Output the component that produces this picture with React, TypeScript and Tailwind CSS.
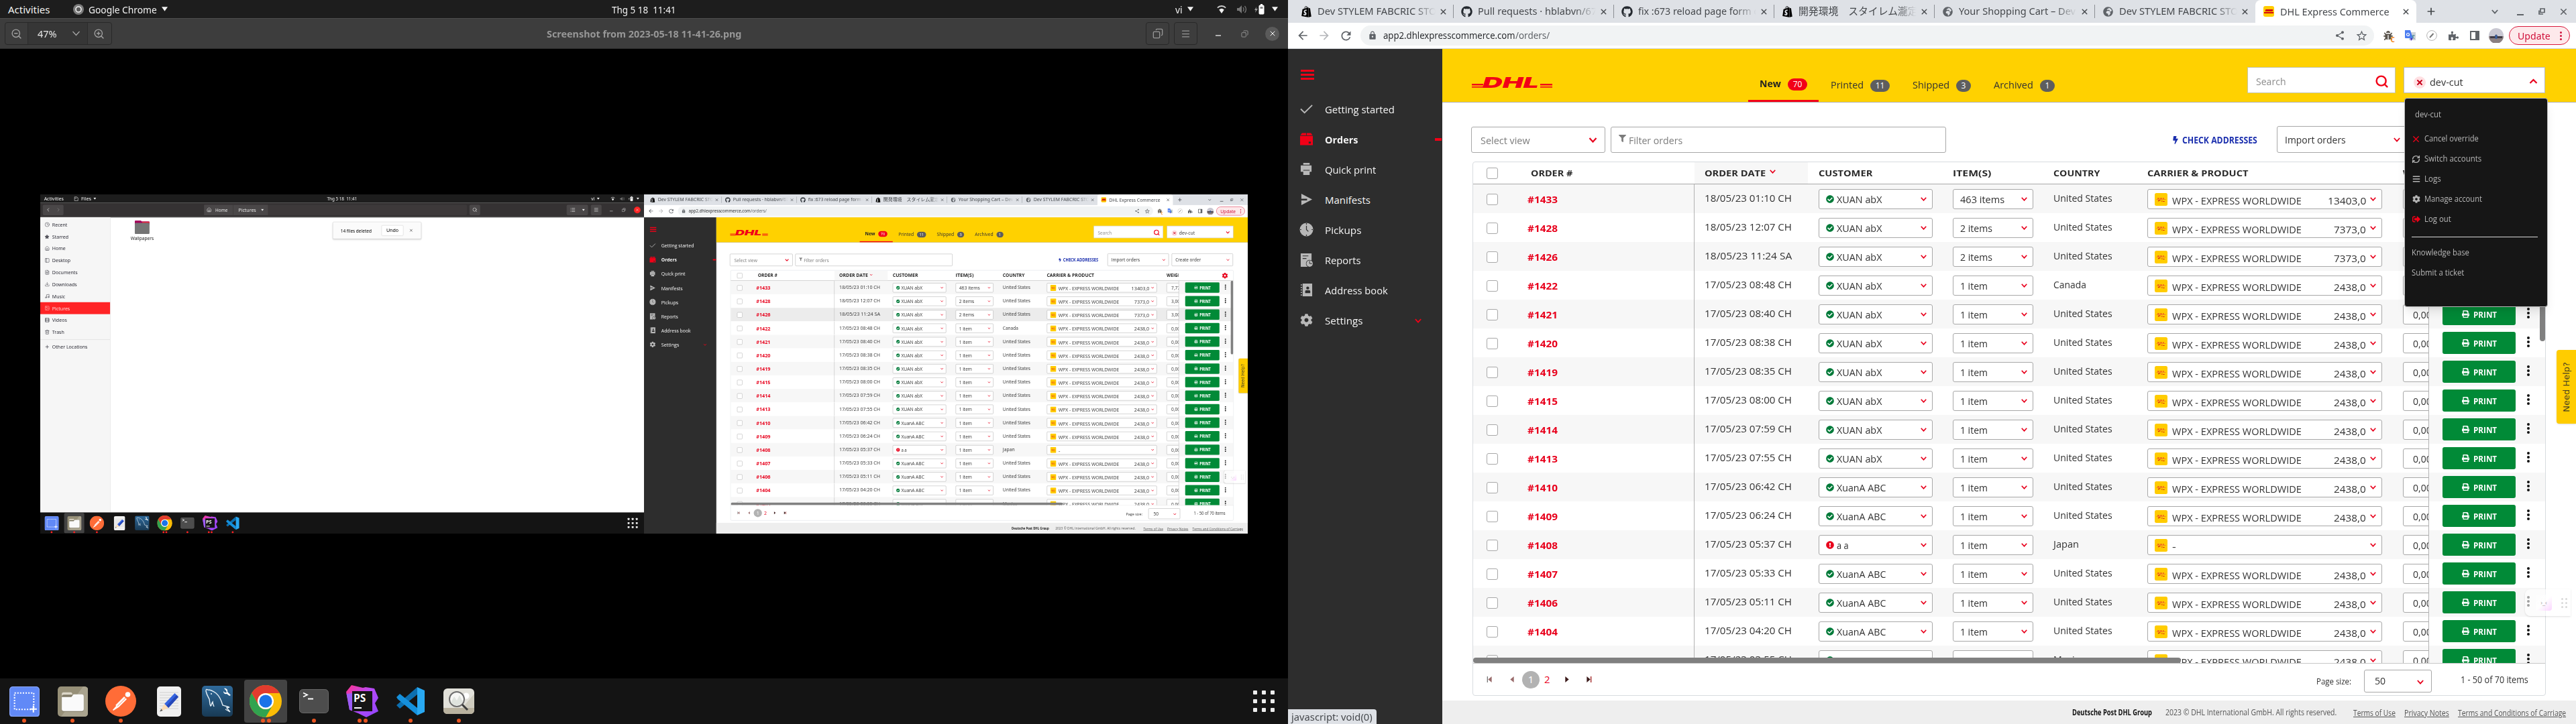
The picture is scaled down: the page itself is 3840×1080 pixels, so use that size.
import { useLayoutEffect, useRef, useState } from "react";
import type { ReactNode } from "react";
import { FaGithub, FaShopify, FaGlobeAfrica, FaFilter, FaBolt, FaCog, FaPrint, FaPuzzlePiece, FaCheckCircle, FaExclamationCircle, FaBug, FaSignOutAlt, FaBars, FaStar } from "react-icons/fa";
import { MdLock, MdStarBorder, MdShare, MdRefresh, MdArrowBack, MdArrowForward } from "react-icons/md";
import { Clock, House, FileText, Download, Music, Image as ImageIcon, Film, Trash2, Plus, Minus, Search, ZoomIn, ZoomOut, RefreshCw, Copy, Menu, X, ChevronLeft, ChevronRight, PanelLeft, List } from "lucide-react";

/* Single line of text condensed or widened to a given width. */
function T({ w, children, className = "" }: { w: number; children: ReactNode; className?: string }) {
  const ref = useRef<HTMLSpanElement>(null);
  const [k, setK] = useState(1);
  useLayoutEffect(() => {
    if (ref.current) setK(w / ref.current.offsetWidth);
  }, [w, children]);
  return (
    <span className={`inline-block shrink-0 leading-[20px] ${className}`} style={{ width: w }}>
      <span ref={ref} className="inline-block origin-left whitespace-pre" style={{ transform: `scaleX(${k})` }}>
        {children}
      </span>
    </span>
  );
}

function Chev({ className = "", up = false, w = 2.2 }: { className?: string; up?: boolean; w?: number }) {
  return (
    <svg viewBox="0 0 12 8" className={`shrink-0 ${className}`} fill="none" stroke="currentColor" strokeWidth={w}>
      <path d={up ? "M1 7 L6 2 L11 7" : "M1 1 L6 6.5 L11 1"} />
    </svg>
  );
}

/* ---------- GNOME shell ---------- */

function Tri() {
  return (
    <svg viewBox="0 0 10 7" className="h-[7px] w-[9px] shrink-0" fill="currentColor">
      <path d="M0 0h10L5 7z" />
    </svg>
  );
}

function TopBar({ app, appW }: { app: string; appW: number }) {
  return (
    <div className="grid h-[27px] grid-cols-3 items-center bg-[#1d1d1d] text-[15px] text-[#f2f2f2]">
      <div className="flex items-center pl-3">
        <T w={63}>Activities</T>
        {app === "Files" ? (
          <svg viewBox="0 0 16 16" className="ml-[32px] h-4 w-4" fill="none" stroke="#ccc" strokeWidth="1.5">
            <path d="M2 2h7l4 3v9H2zM2 6h6l2-2" />
          </svg>
        ) : (
          <svg viewBox="0 0 16 16" className="ml-[34px] h-4 w-4">
            <circle cx="8" cy="8" r="8" fill="#7b7b7b" />
            <circle cx="8" cy="8" r="4" fill="#5a5a5a" stroke="#f0f0f0" strokeWidth="1.6" />
          </svg>
        )}
        <T w={appW} className="ml-[7px] mr-[7px]">{app}</T>
        <Tri />
      </div>
      <div className="flex justify-center">
        <T w={96}>Thg 5 18  11:41</T>
      </div>
      <div className="flex items-center justify-end pr-[15px]">
        <T w={11} className="mr-[7px]">vi</T>
        <Tri />
        <svg viewBox="0 0 16 16" className="ml-[34px] h-[15px] w-4" fill="#f2f2f2">
          <path d="M8 15 L4 9 A6 6 0 0 1 12 9z" />
          <path d="M1.5 6 A9 9 0 0 1 14.5 6" fill="none" stroke="#cfcfcf" strokeWidth="2" />
        </svg>
        <svg viewBox="0 0 16 16" className="ml-[14px] h-4 w-4" fill="#777" stroke="#777">
          <path d="M1 6h3l4-4v12L4 10H1z" stroke="none" />
          <path d="M10 5q2 3 0 6M12.500 3q4 5 0 10" fill="none" strokeWidth="1.300" />
        </svg>
        <svg viewBox="0 0 18 18" className="ml-[10px] h-[18px] w-[18px]">
          <path d="M4 5 L1 10h2l-1 4 4-6H3.500z" fill="#999" />
          <rect x="8" y="3" width="7" height="13" rx="1" fill="#fff" stroke="#fff" />
          <rect x="10" y="1" width="3" height="2" fill="#fff" />
          <rect x="9.500" y="5" width="4" height="3" fill="#888" />
        </svg>
        <span className="ml-[9px] flex"><Tri /></span>
      </div>
    </div>
  );
}

function IcoShot() {
  return (
    <svg viewBox="0 0 44 44" className="h-[45px] w-[45px]">
      <rect width="44" height="45" rx="5" fill="#6189f7" />
      <rect x=".5" y=".5" width="43" height="43" rx="5" fill="none" stroke="#8fabff" />
      <rect x="7.500" y="9.500" width="28" height="24" fill="none" stroke="#fff" strokeWidth="2" strokeDasharray="2 2" />
      <path d="M35 28v10M30 33h10" stroke="#fff" strokeWidth="2" />
    </svg>
  );
}
function IcoFiles() {
  return (
    <svg viewBox="0 0 44 44" className="h-[45px] w-[45px]">
      <rect width="44" height="44" rx="5" fill="#979078" />
      <path d="M44 3v36q0 5-5 5H5L37 0q6 0 7 3z" fill="#aaa48f" />
      <path d="M6 16v-5q0-2.500 2.500-2.500H19q2 0 2.500 3L24 14z" fill="#dcd7c8" />
      <rect x="6" y="12" width="32" height="25" rx="3" fill="#807a66" />
      <path d="M6 15.500h14l3-4h12q3 0 3 3V33q0 3-3 3H9q-3 0-3-3z" fill="#fafafa" />
    </svg>
  );
}
function IcoPostman() {
  return (
    <svg viewBox="0 0 46 46" className="h-[46px] w-[46px]">
      <circle cx="23" cy="23" r="23" fill="#ff6c37" />
      <circle cx="33.500" cy="13" r="3.800" fill="#fff" />
      <path d="M28 16l4 4-12 12-5-3z M17 29l3 3-8 5-1-1z" fill="#fff" />
      <path d="M30.500 18 18 30.500" stroke="#ff6c37" strokeWidth=".9" />
    </svg>
  );
}
function IcoText() {
  return (
    <svg viewBox="0 0 36 45" className="h-[45px] w-9">
      <rect width="36" height="45" rx="5" fill="#f0f0f0" />
      <path d="M4 9h28M4 13h28M4 17h28M4 21h28M4 25h28M4 29h28M4 33h28" stroke="#cfcfcf" />
      <path d="M26.500 10 32 15.500 17 32l-6-6z" fill="#3564e0" />
      <path d="M29 13 14 29l3 3 15-16.500z" fill="#2547b8" />
      <path d="M11 26l6 6-12 5z" fill="#fcdcb4" />
      <path d="M6.500 33.500 8.500 36 4 37.500z" fill="#555" />
    </svg>
  );
}
function IcoMysql() {
  return (
    <svg viewBox="0 0 46 46" className="h-[46px] w-[46px]">
      <defs>
        <linearGradient id="mysqlBg" x1="0" y1="0" x2="0" y2="1">
          <stop offset="0" stopColor="#2f6a9b" />
          <stop offset="1" stopColor="#183a55" />
        </linearGradient>
      </defs>
      <rect width="46" height="46" rx="5" fill="url(#mysqlBg)" />
      <path d="M18 31c-1-2-2-4-2-7-2 2-1 5-3 6-2-3-1-7-2-10C9 16 7 13 6 8c0-3 1-3 3-2 5 0 8 2 12 5 6 5 8 11 10 18 4 1 6 2 10 3l-4 1 5 6-7-4" fill="none" stroke="#e4eef5" strokeWidth="1.400" />
      <path d="M33 4l3 3 1 3-3 0-2-2c0 4 3 5 5 4l4 3 2-1-5-5c1-3-2-6-5-5z" fill="#fff" />
      <circle cx="14" cy="12" r="1" fill="#fff" />
    </svg>
  );
}
function IcoChrome() {
  return (
    <svg viewBox="0 0 48 48" className="h-12 w-12">
      <circle cx="24" cy="24" r="24" fill="#fbbc05" />
      <path d="M3.200 12A24 24 0 0 1 44.800 12H24a12 12 0 0 0-10.400 18z" fill="#e33b2e" />
      <path d="M3.200 12A24 24 0 0 0 24 48l10.400-18A12 12 0 0 1 13.600 30z" fill="#31a350" />
      <circle cx="24" cy="24" r="12" fill="#fff" />
      <circle cx="24" cy="24" r="9.600" fill="#1a73e8" />
    </svg>
  );
}
function IcoTerm() {
  return (
    <svg viewBox="0 0 44 36" className="h-9 w-11">
      <rect x=".5" y=".5" width="43" height="35" rx="5" fill="#4d4d4d" stroke="#686868" />
      <path d="M6 5.500 12 8.500 6 11.500" fill="none" stroke="#fff" strokeWidth="1.800" />
      <path d="M13 14.500h8" stroke="#fff" strokeWidth="2" />
    </svg>
  );
}
function IcoStorm() {
  return (
    <svg viewBox="0 0 48 48" className="h-12 w-12">
      <defs>
        <linearGradient id="stormBg" x1="0" y1="0" x2="1" y2="1">
          <stop offset="0" stopColor="#ff318c" />
          <stop offset=".45" stopColor="#b74af7" />
          <stop offset="1" stopColor="#8f45ff" />
        </linearGradient>
      </defs>
      <path d="M8 0 25 4l4-1 13 2 6 14-5 8 5 12-18 9-12-6L5 37 0 10z" fill="url(#stormBg)" />
      <path d="M1 13 0 10 5 37l5 0V12z" fill="#9b5cf5" />
      <rect x="9" y="9" width="30" height="30" fill="#151515" />
      <text x="11" y="24.500" fontSize="15.500" fontWeight="700" fontFamily="Open Sans" fill="#fff">PS</text>
      <path d="M12 34h11" stroke="#fff" strokeWidth="2" />
    </svg>
  );
}
function IcoCode() {
  return (
    <svg viewBox="0 0 42 42" className="h-[42px] w-[42px]">
      <path d="M0 27 31 0v11L5 32z" fill="#0c6fb0" />
      <path d="M0 15 5 10 31 31v11L2 18z" fill="#1590dc" />
      <path d="M31 0 42 5v32l-11 5z" fill="#29a9f2" />
    </svg>
  );
}
function IcoViewer() {
  return (
    <svg viewBox="0 0 46 38" className="h-[38px] w-[46px]">
      <rect width="46" height="38" rx="6" fill="#e2e1da" />
      <path d="M0 29h46v3q0 6-6 6H6q-6 0-6-6z" fill="#b9b29f" />
      <path d="M28 29 46 8v21z" fill="#cfccbf" />
      <circle cx="34" cy="11" r="4.500" fill="#fff" />
      <circle cx="20" cy="16" r="11" fill="#f7f7f5" stroke="#6d6d6d" strokeWidth="2" />
      <path d="M11 21l5-9 4 6 4-8 5 10q-9 10-18 1z" fill="#dfe3de" />
      <path d="M28 24l8 8" stroke="#3b3b3b" strokeWidth="3" />
    </svg>
  );
}

function Dock({ active, mini = false }: { active: number; mini?: boolean }) {
  const items: [ReactNode, number][] = [
    [<IcoShot />, 1],
    [<IcoFiles />, 1],
    [<IcoPostman />, 1],
    [<IcoText />, 0],
    [<IcoMysql />, 0],
    [<IcoChrome />, 2],
    [<IcoTerm />, 1],
    [<IcoStorm />, 2],
    [<IcoCode />, 1],
    [<IcoViewer />, 1],
  ];
  return (
    <div className="flex h-[68px] items-center justify-between bg-[#141414] pl-1 pr-[20px]">
      <div className="flex gap-2">
        {(mini ? items.slice(0, 9) : items).map(([icon, dots], i) => (
          <div key={i} className={`relative flex h-16 w-16 items-center justify-center rounded ${i === active ? "bg-[#434343]" : ""}`}>
            {icon}
            <div className="absolute bottom-0 flex gap-[3px]">
              {Array.from({ length: dots }).map((_, d) => (
                <span key={d} className={`h-[6px] w-[6px] rounded-full ${mini ? "bg-[#f22]" : "bg-[#e95420]"}`} />
              ))}
            </div>
          </div>
        ))}
      </div>
      <div className="grid grid-cols-3 gap-x-[7px] gap-y-[7px]">
        {Array.from({ length: 9 }).map((_, i) => (
          <span key={i} className="h-[6px] w-[6px] rounded-[1px] bg-[#ececec]" />
        ))}
      </div>
    </div>
  );
}

/* ---------- GNOME files window ---------- */

function FilesDesktop() {
  const places: [string, ReactNode][] = [
    ["Recent", <Clock size={16} />],
    ["Starred", <FaStar size={15} />],
    ["Home", <House size={16} />],
    ["Desktop", <PanelLeft size={16} />],
    ["Documents", <FileText size={16} />],
    ["Downloads", <Download size={16} />],
    ["Music", <Music size={16} />],
    ["Pictures", <ImageIcon size={16} />],
    ["Videos", <Film size={16} />],
    ["Trash", <Trash2 size={16} />],
  ];
  return (
    <div className="flex h-[1080px] w-[1920px] flex-col bg-white font-['Noto_Sans',sans-serif] text-[15px]">
      <TopBar app="Files" appW={32} />
      <div className="flex h-[46px] items-center border-b-2 border-[#5c5a5a] bg-[#353233] text-[#e8e8e8]">
        <div className="ml-2 flex h-[33px] w-[66px] items-center justify-around rounded bg-[#4a4748]">
          <ChevronLeft size={18} />
          <ChevronRight size={18} className="text-[#888]" />
        </div>
        <div className="ml-[447px] flex h-[33px] w-[836px] rounded bg-[#3d393a]">
          <div className="flex w-[93px] items-center gap-3 border-r border-[#353233] bg-[#4a4748] pl-2">
            <House size={16} /> <T w={39}>Home</T>
          </div>
          <div className="flex w-[110px] items-center gap-4 bg-[#4a4748] pl-4">
            <T w={56}>Pictures</T> <Tri />
          </div>
        </div>
        <div className="ml-2 flex h-[33px] w-[34px] items-center justify-center rounded bg-[#4a4748]"><Search size={16} /></div>
        <div className="ml-[275px] flex h-[33px] w-[68px] items-center justify-around rounded bg-[#4a4748]"><List size={17} /><Tri /></div>
        <div className="ml-[9px] flex h-[33px] w-[34px] items-center justify-center rounded bg-[#4a4748]"><Menu size={16} /></div>
        <Minus size={14} className="ml-[24px] mt-2" />
        <Copy size={13} className="ml-[26px] -scale-x-100" />
        <div className="ml-[26px] flex h-[21px] w-[21px] items-center justify-center rounded-full bg-[#ff2424]"><X size={13} /></div>
      </div>
      <div className="flex min-h-0 flex-1">
        <div className="w-[223px] border-r border-[#dcdcdc] bg-[#f6f6f6] pt-1 text-[#2e2e38]">
          {places.map(([n, ic]) => (
            <div key={n} className={`flex h-[38px] items-center gap-2 pl-[14px] ${n === "Pictures" ? "bg-[#ff2426] text-[#ffd8d8]" : ""}`}>
              <span className="w-4 opacity-80">{ic}</span>
              {n}
            </div>
          ))}
          <div className="mt-1 flex h-[46px] items-center gap-2 border-t-2 border-[#e3e3e3] pl-[14px]">
            <Plus size={16} /> Other Locations
          </div>
        </div>
        <div className="relative flex-1 pl-[62px] pt-[10px]">
          <div className="flex w-[78px] flex-col items-center">
            <svg viewBox="0 0 48 44" className="h-[43px] w-[48px]">
              <path d="M0 12V3q0-3 3-3h16l4 3h22q3 0 3 3v8H0z" fill="#a5005c" />
              <path d="M24 4h24v4H24z" fill="#e8303c" />
              <rect y="8" width="48" height="36" rx="3" fill="#757575" />
            </svg>
            <span className="mt-[2px] text-[14px] text-[#222]">Wallpapers</span>
          </div>
          <div className="absolute left-[707px] top-[14px] flex h-[55px] w-[282px] items-center rounded border border-[#ccc] bg-[#fbfbfb] pl-6 shadow-md">
            <T w={99}>14 files deleted</T>
            <span className="ml-[31px] flex h-[34px] w-[70px] items-center justify-center rounded border border-[#ccc] bg-white">Undo</span>
            <X size={13} className="ml-[18px]" />
          </div>
        </div>
      </div>
      <Dock active={1} mini />
    </div>
  );
}

/* ---------- Chrome with the order page ---------- */

function DhlLogo() {
  return (
    <div className="flex h-4 w-[120px] items-end text-[#f20017]">
      <span className="mr-[-1px] flex w-[17px] flex-col gap-px">
        <i className="h-[2px] bg-[#f20017]" /><i className="h-[1px] bg-[#f20017]" /><i className="h-[1px] bg-[#f20017]" />
      </span>
      <T w={84} className="h-4 font-['Inter',sans-serif] text-[22px] font-black italic !leading-[16px]">DHL</T>
      <span className="ml-auto flex w-[18px] flex-col gap-px">
        <i className="h-[2px] bg-[#f20017]" /><i className="h-[1px] bg-[#f20017]" /><i className="h-[1px] bg-[#f20017]" />
      </span>
    </div>
  );
}

function CarrierBadge() {
  return (
    <svg viewBox="0 0 19 19" className="h-[19px] w-[19px] shrink-0">
      <rect width="19" height="19" rx="2.500" fill="#ffcc00" />
      <path d="M4 8h3M8 8h3M12 8h2" stroke="#e8202a" strokeWidth="1.200" />
      <path d="M2.500 9.500h14" stroke="#f0603a" strokeWidth=".7" />
      <path d="M5 12l1.500-1h2M10 12h1.500M12.500 12.500h2" stroke="#d40511" strokeWidth="1.100" fill="none" />
    </svg>
  );
}

const tabs: [string, number, ReactNode][] = [
  ["Dev STYLEM FABCRIC STO", 178, <FaShopify size={17} className="text-black" />],
  ["Pull requests · hblabvn/67", 177, <FaGithub size={17} className="text-[#24292f]" />],
  ["fix :673 reload page form c", 179, <FaGithub size={17} className="text-[#24292f]" />],
  ["開発環境　スタイレム瀧定", 178, <FaShopify size={17} className="text-black" />],
  ["Your Shopping Cart – Dev", 174, <FaGlobeAfrica size={15} className="text-[#5f6368]" />],
  ["Dev STYLEM FABCRIC STO", 178, <FaGlobeAfrica size={15} className="text-[#5f6368]" />],
];

function TabStrip() {
  return (
    <div className="flex h-[34px] items-center bg-[#dee1e6] pl-2 text-[15px] text-[#45484c]">
      {tabs.map(([label, w, icon], i) => (
        <div key={i} className="flex h-[34px] w-[239px] shrink-0 items-center pl-[11px]">
          <span className="flex w-[17px] justify-center">{icon}</span>
          <div className="ml-2 w-[176px] overflow-hidden [mask-image:linear-gradient(to_right,black_82%,transparent)]">
            <T w={w} className="relative -top-px">{label}</T>
          </div>
          <X size={13} strokeWidth={2.6} className="ml-[5px]" />
          <span className={`ml-auto h-5 w-px ${i < 5 ? "bg-[#8c8f94]" : ""}`} />
        </div>
      ))}
      <div className="flex h-[34px] w-[240px] shrink-0 items-center rounded-t-lg bg-white pl-[12px]">
        <span className="flex h-4 w-4 flex-col items-center justify-center gap-px rounded-[3px] bg-[#fc0]">
          <i className="h-[3px] w-[11px] -skew-x-12 bg-[#d40511]" />
          <i className="h-[2px] w-[14px] bg-[#d40511]" />
        </span>
        <T w={163} className="ml-[9px]">DHL Express Commerce</T>
        <X size={13} strokeWidth={2.6} className="ml-[18px]" />
      </div>
      <Plus size={16} strokeWidth={2.6} className="ml-[14px]" />
      <Chev className="ml-[82px] h-[7px] w-[10px] text-[#5f6368]" />
      <span className="ml-[28px] mt-[9px] h-[2px] w-[10px] bg-[#5f6368]" />
      <svg viewBox="0 0 10 10" className="ml-[22px] h-[10px] w-[10px]" fill="none" stroke="#5f6368" strokeWidth="1.700">
        <path d="M3 1h6v5.500H3zM1 3.500V9h6" />
      </svg>
      <X size={15} strokeWidth={2.6} className="ml-[20px] text-[#5f6368]" />
    </div>
  );
}

function Toolbar() {
  return (
    <div className="flex h-[39px] items-center border-b border-[#d0d3d8] bg-white text-[15px] text-[#5f6368]">
      <MdArrowBack size={20} className="ml-[12px]" />
      <MdArrowForward size={20} className="ml-[12px] text-[#b5b7ba]" />
      <MdRefresh size={21} className="ml-[12px]" />
      <div className="ml-[11px] flex h-[30px] w-[1511px] items-center rounded-full bg-[#f1f3f4]">
        <MdLock size={14} className="ml-[11px]" />
        <T w={197} className="mb-[2px] ml-[9px] text-[#2a2c2f]">app2.dhlexpresscommerce.com</T>
        <T w={51} className="mb-[2px]">/orders/</T>
        <MdShare size={16} className="ml-auto" />
        <MdStarBorder size={19} className="ml-[15px] mr-[9px]" />
      </div>
      <span className="relative ml-[14px] flex w-[16px]">
        <FaBug size={14} className="text-[#5a544c]" />
        <b className="absolute -bottom-[6px] -right-px text-[10px] leading-[14px] text-[#f58a1f]">C</b>
      </span>
      <svg viewBox="0 0 16 16" className="ml-[16px] h-4 w-4">
        <rect x="6" y="3" width="10" height="12" fill="#cfd3d8" />
        <path d="M0 0h8l4 12H1q-1 0-1-1z" fill="#4c7df0" />
        <path d="M8 12h4l-3 4z" fill="#4a30c0" />
        <circle cx="4.500" cy="6.500" r="2" fill="none" stroke="#fff" strokeWidth="1.200" />
        <path d="M10 8h5M12.500 7c0 3-1 4-2.500 5M11 9l3 4" stroke="#4c8a98" fill="none" />
      </svg>
      <svg viewBox="0 0 16 16" className="ml-[16px] h-4 w-4" fill="none">
        <circle cx="8" cy="8" r="7.400" stroke="#b5b5b5" />
        <path d="M5 11l5.500-6" stroke="#777" strokeWidth="2" />
      </svg>
      <FaPuzzlePiece size={15} className="ml-[17px]" />
      <svg viewBox="0 0 14 14" className="ml-[17px] h-[14px] w-[14px]">
        <path d="M1 1h12v12H1z" fill="#fff" stroke="#5f6368" strokeWidth="2" />
        <path d="M8 1h5v12H8z" fill="#5f6368" />
      </svg>
      <svg viewBox="0 0 22 22" className="ml-[14px] h-[22px] w-[22px]">
        <circle cx="11" cy="11" r="11" fill="#c9c8d2" />
        <path d="M0 12h22A11 11 0 0 1 0 12z" fill="#8a7f80" />
        <path d="M2 12h7l2-3 2 3h7v3H2z" fill="#3e3a44" />
        <rect x="9.500" y="10" width="3" height="6" fill="#3a5f9e" />
      </svg>
      <div className="ml-[8px] flex h-[28px] w-[91px] items-center rounded-full border border-[#d9183a] bg-[#fde9eb] pl-[12px] text-[#d0103a]">
        <T w={49} className="mb-px">Update</T>
        <span className="ml-[14px] flex flex-col gap-[2px]">
          <i className="h-[3px] w-[3px] rounded-full bg-current" />
          <i className="h-[3px] w-[3px] rounded-full bg-current" />
          <i className="h-[3px] w-[3px] rounded-full bg-current" />
        </span>
      </div>
    </div>
  );
}

const sideIcons: ReactNode[] = [
  <path d="M1 10l6 6L19 4" fill="none" stroke="currentColor" strokeWidth="2" />,
  <g><path d="M3 0.500h6.500v3.500H0.500zM10.500 0.500h6.500l2.500 3.500h-9zM0 5h20v14.500H0z" /><rect x="13.500" y="14" width="3.500" height="3" fill="#2d2d2d" /></g>,
  <path d="M5 0h10v3H5zM1 4h17v10h-3v-3H5v3H1zM5 12h10v7H5z" />,
  <path d="M2 1l17 9-17 9V11.500h9v-2.500H2z" />,
  <g><circle cx="10" cy="10" r="10.500" /><path d="M10 4v6l3 3M10 0v2M10 18v2M0 10h2M18 10h2" stroke="#2d2d2d" strokeWidth="1.300" fill="none" /></g>,
  <g><path d="M1 0h17v11a5 5 0 0 0-6 10H1z" /><path d="M4 4h9M4 8h6" stroke="#2d2d2d" strokeWidth="1.200" /><circle cx="15" cy="16" r="5" /><path d="M15 12v4h4" stroke="#2d2d2d" fill="none" /></g>,
  <g><path d="M4 0h15v20H4z" /><path d="M1 2h2M1 6h2M1 10h2M1 14h2M1 18h2" stroke="currentColor" strokeWidth="1.600" /><circle cx="12" cy="7" r="2.300" fill="#2d2d2d" /><path d="M8 15v-3q0-1.500 2-1.500h4q2 0 2 1.500v3z" fill="#2d2d2d" /></g>,
];

const sideItems: [string, number][] = [
  ["Getting started", 104],
  ["Orders", 49],
  ["Quick print", 76],
  ["Manifests", 68],
  ["Pickups", 54],
  ["Reports", 54],
  ["Address book", 94],
  ["Settings", 57],
];

function Sidebar() {
  return (
    <div className="w-[230px] shrink-0 bg-[#2d2d2d] text-[15px] text-[#f4f4f4]">
      <div className="ml-[19px] mt-[31px] flex w-[20px] flex-col gap-[3px]">
        <i className="h-[3px] bg-[#f20017]" />
        <i className="h-[3px] bg-[#f20017]" />
        <i className="h-[3px] bg-[#f20017]" />
      </div>
      <div className="mt-[22px]">
        {sideItems.map(([n, w], i) => (
          <div key={n} className={`flex h-[45px] items-center pl-[18px] ${i === 1 ? "font-bold" : ""}`}>
            {i < 7 ? (
              <svg viewBox="0 0 20 20" className={`mb-[3px] h-[19px] w-[19px] overflow-visible ${i === 1 ? "text-[#f20017]" : "text-[#b8b8b8]"}`} fill="currentColor">
                {sideIcons[i]}
              </svg>
            ) : (
              <FaCog size={19} className="mb-[3px] text-[#b8b8b8]" />
            )}
            <T w={w} className="mb-[2px] ml-[18px]">{n}</T>
            {i === 1 && <span className="mb-[2px] ml-auto mr-px h-1 w-[10px] bg-[#f20017]" />}
            {i === 7 && <Chev className="ml-auto mr-[31px] h-[7px] w-[10px] text-[#f20017]" />}
          </div>
        ))}
      </div>
    </div>
  );
}

const navItems: [string, number, string, string][] = [
  ["Printed", 49, "11", "w-[29px]"],
  ["Shipped", 55, "3", "w-[22px]"],
  ["Archived", 59, "1", "w-[22px]"],
];

const menuItems: [string, number, ReactNode][] = [
  ["Cancel override", 81, <X size={15} className="shrink-0 text-[#f20017]" />],
  ["Switch accounts", 85, <RefreshCw size={13} strokeWidth={2.600} />],
  ["Logs", 25, <FaBars size={12} />],
  ["Manage account", 86, <FaCog size={12} />],
  ["Log out", 40, <FaSignOutAlt size={12} className="text-[#f20017]" />],
];

function AccountMenu() {
  return (
    <div className="absolute left-0 top-[45px] z-20 h-[312px] w-[214px] rounded border border-[#bbb] bg-[#161616] pl-[10px] text-[12.500px] text-[#b6b6b6] shadow-lg">
      <T w={39} className="ml-[5px] mt-[14px]">dev-cut</T>
      <div className="mt-[11px]">
        {menuItems.map(([n, w, ic]) => (
          <div key={n} className="flex h-[30px] items-center">
            <span className="mr-[6px] flex w-[13px] justify-center">{ic}</span>
            <T w={w}>{n}</T>
          </div>
        ))}
      </div>
      <div className="mb-[8px] mt-[11px] h-px w-[188px] bg-[#d8d8d8]" />
      <div className="flex h-[30px] items-center"><T w={86}>Knowledge base</T></div>
      <div className="flex h-[30px] items-center"><T w={78}>Submit a ticket</T></div>
    </div>
  );
}

function Header({ open }: { open: boolean }) {
  return (
    <div className="flex h-[80px] shrink-0 border-b border-[#b2b2b2] bg-[#ffd100] text-[15px] text-[#323232]">
      <div className="ml-[44px] mt-[42px] w-[412px]"><DhlLogo /></div>
      <div className="flex w-[105px] items-start border-b-[3px] border-[#f20017] pl-[17px] pt-[41px]">
        <T w={32} className="font-bold text-[#222]">New</T>
        <span className="ml-[10px] mt-[3px] flex h-[18px] w-[29px] items-center justify-center rounded-full bg-[#f20017] text-[12px] text-white">70</span>
      </div>
      <div className="ml-[18px] flex gap-[34px] pt-[43px]">
        {navItems.map(([n, w, c, cw]) => (
          <div key={n} className="flex items-start">
            <T w={w}>{n}</T>
            <span className={`ml-[10px] mt-[3px] flex h-[18px] items-center justify-center rounded-full bg-[#5e5e5e] text-[12px] text-white ${cw}`}>{c}</span>
          </div>
        ))}
      </div>
      <div className="ml-[287px] mt-[27px] flex h-[39px] w-[221px] items-center justify-between border border-[#c4c4a8] bg-white pl-[12px] pr-[9px]">
        <T w={45} className="mt-[3px] text-[#8c8c8c]">Search</T>
        <Search size={21} strokeWidth={2.8} className="mt-[3px] text-[#f20017]" />
      </div>
      <div className="relative ml-[12px] mt-[27px] flex h-[39px] w-[211px] items-center border border-[#b8b8b8] bg-white">
        <span className="ml-[14px] mt-[7px] flex h-[18px] w-[18px] items-center justify-center rounded-full bg-[#ffdfe2]">
          <X size={12} strokeWidth={4} className="text-[#c8001a]" />
        </span>
        <T w={50} className="ml-[6px] mt-[5px]">dev-cut</T>
        <Chev up={open} className="ml-auto mr-[10px] mt-[3px] h-[8px] w-[13px] text-[#e8001c]" />
        {open && <AccountMenu />}
      </div>
    </div>
  );
}

const sel = "flex items-center rounded-[3px] border border-[#a8a8a8] bg-white";

function Filters() {
  return (
    <div className="mt-[35px] flex h-[40px] shrink-0 items-end pl-[43px] text-[15px] text-[#323232]">
      <div className={`${sel} h-[39px] w-[200px] pl-[13px] pr-[11px] text-[#7c7c7c]`}>
        <T w={74}>Select view</T>
        <Chev className="ml-auto h-[8px] w-[13px] text-[#e8001c]" />
      </div>
      <div className={`${sel} ml-2 h-[39px] w-[500px] pl-[11px] text-[#7c7c7c]`}>
        <FaFilter size={11} className="mb-1" />
        <T w={80} className="ml-[4px]">Filter orders</T>
      </div>
      <div className="ml-[336px] flex h-[39px] items-center text-[14px] font-bold text-[#1b2fae]">
        <FaBolt size={12} className="mr-[4px]" />
        <T w={112}>CHECK ADDRESSES</T>
      </div>
      <div className={`${sel} ml-[29px] h-[40px] w-[195px] pl-[11px] pr-[10px]`}>
        <T w={91} className="mb-px">Import orders</T>
        <Chev className="ml-auto h-[7px] w-[10px] text-[#e8001c]" />
      </div>
      <div className={`${sel} ml-[9px] h-[40px] w-[195px] pl-[11px] pr-[10px]`}>
        <T w={81} className="mb-px">Create order</T>
        <Chev className="ml-auto h-[7px] w-[10px] text-[#e8001c]" />
      </div>
    </div>
  );
}

type Order = { id: string; date: string; cust: string; items: string; country: string; price: string; weight: string };
const mk = (id: string, date: string, cust = "XUAN abX", items = "1 item", country = "United States", price = "2438,0", weight = "0,00"): Order => ({ id, date, cust, items, country, price, weight });
const orders: Order[] = [
  mk("#1433", "18/05/23 01:10 CH", "XUAN abX", "463 items", "United States", "13403,0", "7,77"),
  mk("#1428", "18/05/23 12:07 CH", "XUAN abX", "2 items", "United States", "7373,0", "3,00"),
  mk("#1426", "18/05/23 11:24 SA", "XUAN abX", "2 items", "United States", "7373,0", "3,00"),
  mk("#1422", "17/05/23 08:48 CH", "XUAN abX", "1 item", "Canada"),
  mk("#1421", "17/05/23 08:40 CH"),
  mk("#1420", "17/05/23 08:38 CH"),
  mk("#1419", "17/05/23 08:35 CH"),
  mk("#1415", "17/05/23 08:00 CH"),
  mk("#1414", "17/05/23 07:59 CH"),
  mk("#1413", "17/05/23 07:55 CH"),
  mk("#1410", "17/05/23 06:42 CH", "XuanA ABC"),
  mk("#1409", "17/05/23 06:24 CH", "XuanA ABC"),
  mk("#1408", "17/05/23 05:37 CH", "a a", "1 item", "Japan", ""),
  mk("#1407", "17/05/23 05:33 CH", "XuanA ABC"),
  mk("#1406", "17/05/23 05:11 CH", "XuanA ABC"),
  mk("#1404", "17/05/23 04:20 CH", "XuanA ABC"),
  mk("#1403", "17/05/23 03:55 CH", "XuanA ABC", "1 item", "Mexico"),
];
const custW: Record<string, number> = { "XUAN abX": 67, "XuanA ABC": 73, "a a": 18 };
const itemsW: Record<string, number> = { "463 items": 66, "2 items": 48, "1 item": 41 };
const countryW: Record<string, number> = { "United States": 88, Canada: 49, Japan: 38, Mexico: 47 };

const cols = "grid w-[1424px] shrink-0 grid-cols-[81px_248px_186px_200px_150px_140px_381px_38px] items-center overflow-hidden";
const Box = () => <span className="ml-[20px] h-[17px] w-[17px] rounded-[3px] border border-[#a8a8a8] bg-white" />;

function Row({ o, i, hover }: { o: Order; i: number; hover: boolean }) {
  const bg = hover ? "bg-[#ececec]" : i % 2 === 0 ? "bg-[#f7f7f7]" : "bg-white";
  return (
    <div className={`flex h-[43px] shrink-0 ${bg}`}>
      <div className={cols}>
        <span className="flex pt-[2px]"><Box /></span>
        <T w={45} className="font-bold text-[#e8001c]">{o.id}</T>
        <div className="flex h-[43px] items-center border-l border-[#b2b2b2] pl-[15px]">
          <T w={130} className="mb-[3px]">{o.date}</T>
        </div>
        <div className={`${sel} mt-px h-[30px] w-[170px] pl-[10px] pr-[8px]`}>
          {o.cust === "a a" ? <FaExclamationCircle size={12} className="text-[#e8001c]" /> : <FaCheckCircle size={12} className="text-[#007a39]" />}
          <T w={custW[o.cust]} className="ml-[4px]">{o.cust}</T>
          <Chev className="ml-auto h-[6px] w-[9px] text-[#e8001c]" />
        </div>
        <div className={`${sel} mt-px h-[30px] w-[120px] pl-[10px] pr-[8px]`}>
          <T w={itemsW[o.items]}>{o.items}</T>
          <Chev className="ml-auto h-[6px] w-[9px] text-[#e8001c]" />
        </div>
        <T w={countryW[o.country]} className="mb-[3px]">{o.country}</T>
        <div className={`${sel} mt-px h-[30px] w-[350px] pl-[10px] pr-[8px]`}>
          <CarrierBadge />
          {o.price ? <T w={193} className="ml-[7px] mt-[3px]">WPX - EXPRESS WORLDWIDE</T> : <T w={6} className="ml-[7px] mt-[3px]">-</T>}
          <span className="ml-auto" />
          {o.price && <T w={o.price.length === 7 ? 57 : 48} className="mt-[3px]">{o.price}</T>}
          <Chev className="ml-[6px] h-[6px] w-[9px] text-[#e8001c]" />
        </div>
        <div className={`${sel} mt-px h-[30px] w-[80px] pl-[14px]`}><T w={28}>{o.weight}</T></div>
      </div>
      <div className="flex flex-1 items-center border-l border-[#b2b2b2] pl-[20px]">
        <div className="flex h-[33px] w-[109px] items-center justify-center gap-[6px] rounded-[3px] bg-[#018a37] text-[13px] font-bold text-white">
          <FaPrint size={11} />
          <T w={35}>PRINT</T>
        </div>
        <span className="mb-[3px] ml-[17px] flex flex-col gap-[2px]">
          <i className="h-[4px] w-[4px] rounded-full bg-[#111]" />
          <i className="h-[4px] w-[4px] rounded-full bg-[#111]" />
          <i className="h-[4px] w-[4px] rounded-full bg-[#111]" />
        </span>
      </div>
    </div>
  );
}

function Table({ hoverRow }: { hoverRow: number }) {
  return (
    <div className="ml-[45px] mt-[13px] flex h-[797px] w-[1600px] shrink-0 flex-col rounded border border-[#d8dce0] bg-white text-[15px] text-[#323232]">
      <div className="flex h-[33px] shrink-0 border-b border-[#a8a8a8] text-[13px] font-bold text-[#2a2a2a]">
        <div className={cols}>
          <span className="flex"><Box /></span>
          <T w={62} className="ml-[5px]">ORDER #</T>
          <div className="relative flex h-[32px] items-center pl-[16px]">
            <i className="absolute inset-y-0 left-px -z-0 w-[169px] bg-[#f7f7f7]" />
            <T w={91} className="relative">ORDER DATE</T>
            <Chev className="relative mb-[4px] ml-[6px] h-[6px] w-[9px] text-[#e8001c]" />
          </div>
          <T w={80}>CUSTOMER</T>
          <T w={57}>ITEM(S)</T>
          <T w={69}>COUNTRY</T>
          <T w={150}>CARRIER &amp; PRODUCT</T>
          <T w={54}>WEIGHT</T>
        </div>
        <div className="flex flex-1 items-center justify-end pr-[17px]"><FaCog size={19} className="text-[#e8001c]" /></div>
      </div>
      <div className="relative h-[714px] shrink-0 overflow-hidden">
        {orders.map((o, i) => <Row key={o.id} o={o} i={i} hover={i === hoverRow} />)}
        <i className="absolute right-0 top-0 h-[234px] w-[8px] rounded bg-[#808080]" />
        <i className="absolute bottom-0 left-0 h-[8px] w-[1055px] rounded bg-[#808080]" />
      </div>
      <div className="flex flex-1 items-center border-t border-[#c8c8c8]">
        <svg viewBox="0 0 9 10" className="ml-[20px] h-[9px] w-[9px]"><path d="M1 0v10" stroke="#777" strokeWidth="1.500" /><path d="M8 0v10L2 5z" fill="#9a6b6b" /></svg>
        <svg viewBox="0 0 6 10" className="ml-[26px] h-[9px] w-[6px]"><path d="M6 0v10L0 5z" fill="#9a6b6b" /></svg>
        <span className="ml-[12px] flex h-[26px] w-[26px] items-center justify-center rounded-full bg-[#b2b2b2] text-white">1</span>
        <span className="ml-[7px] text-[#e8001c]">2</span>
        <svg viewBox="0 0 6 10" className="ml-[22px] h-[9px] w-[6px]"><path d="M0 0v10l6-5z" fill="#3c1a1a" /></svg>
        <svg viewBox="0 0 9 10" className="ml-[25px] h-[9px] w-[9px]"><path d="M8 0v10" stroke="#a02020" strokeWidth="1.500" /><path d="M1 0v10l6-5z" fill="#3c1a1a" /></svg>
        <T w={52} className="ml-auto mt-[4px] text-[13px]">Page size:</T>
        <div className={`${sel} ml-[19px] mt-[4px] h-[34px] w-[101px] pl-[15px] pr-[11px]`}>
          <T w={16} className="mb-px">50</T>
          <Chev className="ml-auto mt-[3px] h-[7px] w-[10px] text-[#e8001c]" />
        </div>
        <T w={101} className="mb-px ml-[43px] mr-[25px]">1 - 50 of 70 items</T>
      </div>
    </div>
  );
}

function Footer() {
  return (
    <div className="mt-[7px] flex h-[35px] items-center bg-[#eeeeee] pl-[939px] text-[12.500px] text-[#555]">
      <T w={119} className="font-bold text-[#111]">Deutsche Post DHL Group</T>
      <T w={255} className="ml-[20px]">2023 © DHL International GmbH. All rights reserved.</T>
      <T w={63} className="ml-[25px] mt-[2px] [&>span]:underline">Terms of Use</T>
      <T w={67} className="ml-[13px] mt-[2px] [&>span]:underline">Privacy Notes</T>
      <T w={161} className="ml-[13px] mt-[2px] [&>span]:underline">Terms and Conditions of Carriage</T>
    </div>
  );
}

function Browser({ open = false, hoverRow = -1, status = false }: { open?: boolean; hoverRow?: number; status?: boolean }) {
  return (
    <div className="relative flex h-[1080px] w-[1920px] shrink-0 flex-col overflow-hidden bg-white font-['Noto_Sans','Noto_Sans_CJK_JP',sans-serif]">
      <TabStrip />
      <Toolbar />
      <div className="flex min-h-0 flex-1 font-['Open_Sans','Noto_Sans',sans-serif]">
        <Sidebar />
        <div className="flex flex-1 flex-col">
          <Header open={open} />
          <Filters />
          <Table hoverRow={hoverRow} />
          <Footer />
        </div>
      </div>
      <div className="absolute right-0 top-[522px] flex h-[110px] w-[29px] items-center justify-center rounded-l bg-[#ffcc00] shadow">
        <span className="font-['DejaVu_Sans',sans-serif] text-[13px] text-[#4c4420] [writing-mode:sideways-lr]">Need Help?</span>
      </div>
      <div className="absolute right-[8px] top-[879px] flex h-[40px] w-[68px] items-center rounded-l-lg bg-white/60 pl-4 shadow-sm">
        <span className="flex h-[24px] w-[24px] items-center justify-center rounded-sm bg-linear-to-br from-white/30 via-white/70 to-fuchsia-300/50 text-[9px] text-[#aaa]">›_‹</span>
        <span className="ml-[14px] grid grid-cols-2 gap-[3px]">
          {Array.from({ length: 6 }).map((_, i) => <i key={i} className="h-[3px] w-[3px] rounded-full bg-[#d8d8d8]" />)}
        </span>
      </div>
      {status && (
        <div className="absolute bottom-0 left-0 flex h-[22px] w-[132px] items-center rounded-tr bg-[#dee1e6] pl-[5px] text-[15px] text-[#45484c]">
          <T w={121}>javascript: void(0)</T>
        </div>
      )}
    </div>
  );
}

/* ---------- Image viewer on the left monitor ---------- */

function ViewerHeader() {
  return (
    <div className="grid h-[46px] grid-cols-3 items-center border-b border-t border-b-[#2b2b2b] border-t-[#4e4e4e] bg-[#3d3d3d] font-['Noto_Sans',sans-serif] text-[15px]">
      <div className="ml-[7px] flex h-[34px] w-[160px] items-center rounded border border-[#282828] text-[#a0a0a0]">
        <ZoomOut size={17} className="ml-[8px] mr-[8px]" />
        <div className="flex h-full w-[90px] items-center border-x border-[#2c2c2c] bg-[#363636] pl-[14px] text-[#e6e6e6]">
          <T w={29}>47%</T>
          <Chev w={1.2} className="ml-[20px] h-[8px] w-[17px] text-[#a8a8a8]" />
        </div>
        <ZoomIn size={17} className="ml-[8px]" />
      </div>
      <div className="flex justify-center">
        <T w={290} className="font-bold text-[#979797]">Screenshot from 2023-05-18 11-41-26.png</T>
      </div>
      <div className="flex items-center justify-end pr-[13px] text-[#979797]">
        <span className="flex h-[34px] w-[35px] items-center justify-center rounded border border-[#282828]"><Copy size={16} className="-scale-x-100" /></span>
        <span className="ml-[7px] flex h-[34px] w-[35px] items-center justify-center rounded border border-[#282828]"><Menu size={15} /></span>
        <span className="ml-[27px] mt-[5px] h-[2px] w-[8px] bg-[#b0b0b0]" />
        <Copy size={11} className="ml-[30px] -scale-x-100" />
        <span className="ml-[25px] flex h-[21px] w-[21px] items-center justify-center rounded-full bg-[#5a5a5a] text-white"><X size={12} /></span>
      </div>
    </div>
  );
}

export default function App() {
  return (
    <div className="flex h-[1080px] w-[3840px] overflow-hidden bg-black">
      <div className="flex h-[1080px] w-[1920px] shrink-0 flex-col font-['Noto_Sans',sans-serif]">
        <TopBar app="Google Chrome" appW={102} />
        <ViewerHeader />
        <div className="flex min-h-0 flex-1 items-center justify-center bg-black">
          <div className="h-[506px] w-[900px] overflow-hidden">
            <div className="h-[1080px] w-[1920px] origin-top-left scale-[0.46875]"><FilesDesktop /></div>
          </div>
          <div className="h-[506px] w-[900px] overflow-hidden">
            <div className="h-[1080px] w-[1920px] origin-top-left scale-[0.46875]"><Browser hoverRow={2} /></div>
          </div>
        </div>
        <Dock active={5} />
      </div>
      <Browser open status />
    </div>
  );
}
